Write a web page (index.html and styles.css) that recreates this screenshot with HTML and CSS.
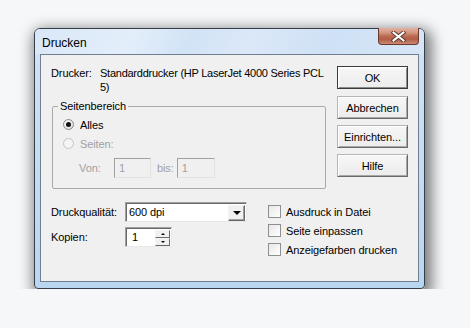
FILE: index.html
```html
<!DOCTYPE html>
<html lang="de">
<head>
    <meta charset="UTF-8">
    <meta name="viewport" content="width=device-width, initial-scale=1.0">
    <title>Drucken</title>
    <link rel="stylesheet" href="styles.css">
</head>
<body>
    <div class="screen">
        <div class="window">
            <div class="titlebar">
                <span class="title">Drucken</span>
                <button class="close" aria-label="Schließen">
                    <svg width="15" height="11" viewBox="0 0 15 11">
                        <path d="M2.5 1.5 L12.5 9.5 M12.5 1.5 L2.5 9.5" stroke="#5a3a30" stroke-width="4" stroke-linecap="square"/>
                        <path d="M2.5 1.5 L12.5 9.5 M12.5 1.5 L2.5 9.5" stroke="#ffffff" stroke-width="2" stroke-linecap="square"/>
                    </svg>
                </button>
            </div>
            <div class="client">
                <div class="top">
                    <div class="left">
                        <div class="printer">
                            <span class="printer-label">Drucker:</span>
                            <span class="printer-name">Standarddrucker (HP LaserJet 4000 Series PCL<br>5)</span>
                        </div>
                        <fieldset class="range">
                            <legend>Seitenbereich</legend>
                            <label class="radio"><span class="dot checked"></span>Alles</label>
                            <label class="radio disabled"><span class="dot"></span>Seiten:</label>
                            <div class="pages">
                                <span class="pages-from">Von:</span>
                                <span class="edit">1</span>
                                <span class="pages-to">bis:</span>
                                <span class="edit wide">1</span>
                            </div>
                        </fieldset>
                    </div>
                    <div class="buttons">
                        <button class="btn default">OK</button>
                        <button class="btn">Abbrechen</button>
                        <button class="btn">Einrichten...</button>
                        <button class="btn">Hilfe</button>
                    </div>
                </div>
                <div class="bottom">
                    <div class="fields">
                        <div class="field">
                            <span class="field-label">Druckqualität:</span>
                            <div class="combo">
                                <span class="combo-text">600 dpi</span>
                                <span class="combo-btn"><span class="arrow-down"></span></span>
                            </div>
                        </div>
                        <div class="field">
                            <span class="field-label">Kopien:</span>
                            <div class="spin">
                                <span class="spin-text">1</span>
                                <span class="spin-btns">
                                    <span class="spin-up"><span class="tiny-up"></span></span>
                                    <span class="spin-down"><span class="tiny-down"></span></span>
                                </span>
                            </div>
                        </div>
                    </div>
                    <div class="checks">
                        <label class="check"><span class="box"></span>Ausdruck in Datei</label>
                        <label class="check"><span class="box"></span>Seite einpassen</label>
                        <label class="check"><span class="box"></span>Anzeigefarben drucken</label>
                    </div>
                </div>
            </div>
        </div>
    </div>
</body>
</html>
```

FILE: styles.css
```css
body {
    margin: 0;
    background: #f6f7f9;
    font-family: "Liberation Sans", Arial, sans-serif;
    font-size: 11px;
    letter-spacing: -0.1px;
    color: #000;
}
.screen {
    padding: 28px 0 0 34px;
}
.window {
    width: 391px;
    height: 261px;
    box-sizing: border-box;
    border: 1px solid #363f49;
    border-radius: 6px 6px 4px 4px;
    background: linear-gradient(180deg, #dfeaf7 0%, #cfe1f4 12%, #c3dbf2 60%, #b9d6f1 100%);
    box-shadow: 3px 5px 14px 4px rgba(0, 0, 0, 0.5);
}
.titlebar {
    height: 25px;
    display: flex;
    align-items: center;
    justify-content: space-between;
    padding: 0 5px 0 7px;
    border-radius: 5px 5px 0 0;
    background: linear-gradient(115deg, #d9e7f7 0%, #e3eefa 25%, #d2e3f6 40%, #dbe8f8 55%, #cfe1f5 75%, #d6e6f7 100%);
}
.title {
    font-size: 12px;
    letter-spacing: 0;
    color: #000;
    margin-top: 2px;
}
.close {
    align-self: flex-start;
    margin-top: -1px;
    width: 41px;
    height: 17px;
    padding: 0;
    border: 1px solid #6b3a2e;
    border-top: none;
    border-radius: 0 0 4px 4px;
    background: linear-gradient(180deg, #e2b2a2 0%, #d39580 30%, #bd6b52 50%, #b25d45 70%, #cc8a73 100%);
    display: flex;
    align-items: center;
    justify-content: center;
}
.client {
    margin: 0 5px;
    height: 228px;
    box-sizing: border-box;
    border: 1px solid #6f7f8f;
    background: #f0f0f0;
    padding: 11px 10px 0 10px;
}
.top {
    display: flex;
    justify-content: space-between;
}
.printer {
    display: flex;
    line-height: 14px;
}
.printer-label {
    width: 49px;
}
.printer-name {
    letter-spacing: -0.25px;
}
.range {
    margin: 5px 0 0 1px;
    width: 274px;
    height: 90px;
    box-sizing: border-box;
    border: 1px solid #a9a9a9;
    border-radius: 2px;
    padding: 2px 0 0 10px;
}
.range legend {
    padding: 0 2px;
    margin-left: -5px;
    line-height: 14px;
}
.radio {
    height: 19px;
    display: flex;
    align-items: center;
}
.radio.disabled {
    color: #a0a0a0;
}
.dot {
    width: 11px;
    height: 11px;
    box-sizing: border-box;
    border: 1px solid #8a8a8a;
    border-radius: 50%;
    background: radial-gradient(circle at 35% 35%, #ffffff 0%, #e8e8e8 60%, #d0d0d0 100%);
    margin-right: 6px;
    display: flex;
    align-items: center;
    justify-content: center;
}
.radio.disabled .dot {
    border-color: #c4c4c4;
    background: #f4f4f4;
}
.dot.checked::after {
    content: "";
    width: 5px;
    height: 5px;
    border-radius: 50%;
    background: #111;
}
.pages {
    margin: 5px 0 0 16px;
    height: 20px;
    display: flex;
    align-items: center;
    color: #a0a0a0;
}
.pages-from {
    width: 35px;
}
.pages-to {
    margin: 0 3px 0 6px;
}
.edit {
    width: 37px;
    height: 20px;
    box-sizing: border-box;
    border: 1px solid;
    border-color: #a0a0a0 #e3e3e3 #e3e3e3 #a0a0a0;
    background: #f0f0f0;
    padding: 3px 0 0 4px;
    line-height: 13px;
}
.edit.wide {
    width: 38px;
}
.buttons {
    display: flex;
    flex-direction: column;
    gap: 6px;
}
.btn {
    width: 71px;
    height: 23px;
    box-sizing: border-box;
    font-family: inherit;
    font-size: 11px;
    letter-spacing: -0.1px;
    color: #000;
    padding: 0;
    border: 1px solid;
    border-color: #b4b4b4 #6a6a6a #6a6a6a #b4b4b4;
    background: linear-gradient(180deg, #f6f6f6 0%, #ececec 100%);
    box-shadow: inset 1px 1px #ffffff, inset -1px -1px #a8a8a8;
}
.btn.default {
    margin-bottom: 1px;
    border-color: #3a3a3a;
    box-shadow: inset 1px 1px #ffffff, inset -1px -1px #8a8a8a, inset 2px 2px #f8f8f8;
}
.bottom {
    display: flex;
    margin-top: 13px;
}
.fields {
    width: 217px;
    display: flex;
    flex-direction: column;
    gap: 5px;
}
.field {
    display: flex;
    align-items: center;
    height: 20px;
}
.field-label {
    width: 74px;
}
.combo {
    width: 122px;
    height: 20px;
    box-sizing: border-box;
    border: 1px solid;
    border-color: #a0a0a0 #e8e8e8 #e8e8e8 #a0a0a0;
    box-shadow: inset 1px 1px #696969;
    background: #fff;
    display: flex;
    align-items: center;
    justify-content: space-between;
    padding: 0 1px 0 3px;
}
.combo-btn {
    width: 17px;
    height: 16px;
    margin-top: 1px;
    box-sizing: border-box;
    border: 1px solid;
    border-color: #f4f4f4 #696969 #696969 #f4f4f4;
    box-shadow: inset -1px -1px #a0a0a0;
    background: #f0f0f0;
    display: flex;
    align-items: center;
    justify-content: center;
}
.arrow-down {
    width: 0;
    height: 0;
    border-left: 4px solid transparent;
    border-right: 4px solid transparent;
    border-top: 4px solid #000;
}
.spin {
    width: 47px;
    height: 20px;
    box-sizing: border-box;
    border: 1px solid;
    border-color: #a0a0a0 #e8e8e8 #e8e8e8 #a0a0a0;
    box-shadow: inset 1px 1px #696969;
    background: #fff;
    display: flex;
    align-items: center;
    justify-content: space-between;
    padding: 0 1px 0 6px;
}
.spin-btns {
    width: 15px;
    height: 16px;
    margin-top: 1px;
    display: flex;
    flex-direction: column;
}
.spin-up, .spin-down {
    flex: 1;
    box-sizing: border-box;
    border: 1px solid;
    border-color: #f4f4f4 #696969 #696969 #f4f4f4;
    background: #f0f0f0;
    display: flex;
    align-items: center;
    justify-content: center;
}
.tiny-up, .tiny-down {
    width: 0;
    height: 0;
    border-left: 2px solid transparent;
    border-right: 2px solid transparent;
}
.tiny-up {
    border-bottom: 2px solid #000;
}
.tiny-down {
    border-top: 2px solid #000;
}
.checks {
    display: flex;
    flex-direction: column;
}
.check {
    height: 19px;
    display: flex;
    align-items: center;
}
.box {
    width: 13px;
    height: 13px;
    box-sizing: border-box;
    border: 1px solid #8f8f8f;
    background: linear-gradient(135deg, #e6e6e6 0%, #f6f6f6 60%, #ffffff 100%);
    margin-right: 5px;
}
```
